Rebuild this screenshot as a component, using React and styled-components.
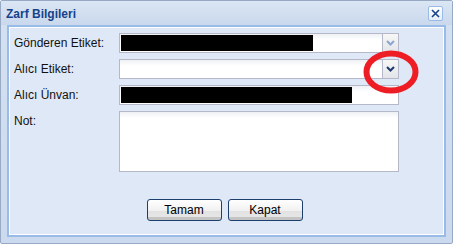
import styled, { createGlobalStyle } from "styled-components"

//#region styled
const Global = createGlobalStyle`
  html, body {
    margin: 0;
    padding: 0;
    background: #fff;
  }
  * {
    box-sizing: border-box;
  }
`

const Window = styled.div`
  position: relative;
  width: 453px;
  height: 244px;
  display: flex;
  flex-direction: column;
  border: 1px solid #98a9c4;
  border-radius: 2px;
  background: linear-gradient(#d4e1f2, #cbdaee);
  padding: 0 6px 6px;
  font-family: "Liberation Sans", Arial, sans-serif;
  font-size: 12px;
`

const Header = styled.div`
  height: 24px;
  display: flex;
  align-items: center;
  justify-content: space-between;
  margin: 0 -6px;
  padding: 0 9px 0 5px;
  background: linear-gradient(#dbe6f4, #c9d8ec);
`

const Title = styled.span`
  color: #15428b;
  font-weight: bold;
  font-size: 12px;
  padding-top: 1px;
`

const CloseButton = styled.div`
  width: 15px;
  height: 15px;
  border: 1px solid #99bbe8;
  border-radius: 2px;
  background: linear-gradient(#ffffff, #e4edf8);
  display: flex;
  align-items: center;
  justify-content: center;
`

const Body = styled.div`
  flex: 1;
  display: flex;
  flex-direction: column;
  border: 2px solid #99bbe8;
  box-shadow: inset 0 0 0 1px #ffffff;
  background: #dfe8f6;
  padding: 6px 0 0 5px;
`

const Form = styled.div`
  display: flex;
  flex-direction: column;
  gap: 6px;
`

const Row = styled.div`
  display: flex;
  align-items: ${p => (p.$top ? "flex-start" : "center")};
`

const Label = styled.label`
  width: 105px;
  line-height: 20px;
  color: #111;
`

const Field = styled.div`
  width: 280px;
  height: ${p => p.$height || 20}px;
  display: flex;
  border: 1px solid #b5b8c8;
  background: linear-gradient(#eef0f3, #ffffff 6px, #ffffff);
`

const Value = styled.div`
  flex: 1;
  padding: 1px 1px;
`

const Redaction = styled.div`
  height: 16px;
  background: #000;
`

const Trigger = styled.div`
  width: 17px;
  margin: -1px -1px -1px 0;
  border: 1px solid #b5b8c8;
  background: linear-gradient(#f7f7f7, #e3e5e9);
  display: flex;
  align-items: center;
  justify-content: center;
`

const Buttons = styled.div`
  display: flex;
  justify-content: center;
  gap: 6px;
  margin-top: 27px;
  padding-right: 9px;
`

const Button = styled.button`
  width: 75px;
  height: 22px;
  border: 1px solid #1d3f6e;
  border-radius: 3px;
  background: linear-gradient(#ffffff, #f0f0f0 55%, #e2e2e2 56%, #e6e6e6 85%, #c4c4c4 86%, #c4c4c4);
  font-family: "Liberation Sans", Arial, sans-serif;
  font-size: 12px;
  color: #000;
  padding: 0;
  cursor: pointer;
`

const Annotation = styled.svg`
  position: absolute;
  left: 362px;
  top: 49px;
  pointer-events: none;
`
//#endregion

const Chevron = ({ color }) => (
  <svg width="9" height="6" viewBox="0 0 9 6">
    <path d="M1 1 L4.5 4.5 L8 1" fill="none" stroke={color} strokeWidth="2" />
  </svg>
)

const App = () => (
  <>
    <Global />
    <Window>
      <Header>
        <Title>Zarf Bilgileri</Title>
        <CloseButton>
          <svg width="11" height="11" viewBox="0 0 11 11">
            <path d="M2 2 L9 9 M9 2 L2 9" stroke="#15428b" strokeWidth="1.6" />
          </svg>
        </CloseButton>
      </Header>
      <Body>
        <Form>
          <Row>
            <Label>Gönderen Etiket:</Label>
            <Field>
              <Value>
                <Redaction style={{ width: 192 }} />
              </Value>
              <Trigger>
                <Chevron color="#8ba6cf" />
              </Trigger>
            </Field>
          </Row>
          <Row>
            <Label>Alıcı Etiket:</Label>
            <Field>
              <Value />
              <Trigger>
                <Chevron color="#1f3a6e" />
              </Trigger>
            </Field>
          </Row>
          <Row>
            <Label>Alıcı Ünvan:</Label>
            <Field>
              <Value>
                <Redaction style={{ width: 231 }} />
              </Value>
            </Field>
          </Row>
          <Row $top>
            <Label>Not:</Label>
            <Field $height={61} />
          </Row>
        </Form>
        <Buttons>
          <Button>Tamam</Button>
          <Button>Kapat</Button>
        </Buttons>
      </Body>
      <Annotation width="56" height="44" viewBox="0 0 56 44">
        <ellipse cx="28" cy="22" rx="24.5" ry="18.5" fill="none" stroke="#ee1c25" strokeWidth="6" />
      </Annotation>
    </Window>
  </>
)

export default App
